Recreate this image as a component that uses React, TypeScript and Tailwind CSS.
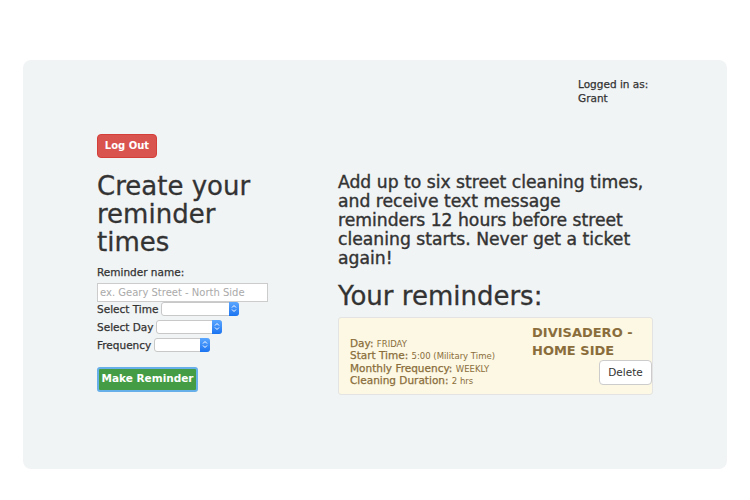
import React from "react";

const font = { fontFamily: '"DejaVu Sans", "Open Sans", sans-serif' };

function Select({ w }: { w: string }) {
  return (
    <div className={`relative h-[14px] ${w} rounded-[3px] border border-[#c8c8c8] bg-white`}>
      <div className="absolute right-[-1px] top-[-1px] flex h-[14px] w-[10px] items-center justify-center rounded-r-[3px] bg-gradient-to-b from-[#5aa6ff] to-[#1a74f0]">
        <svg width="6" height="9" viewBox="0 0 6 9">
          <path d="M1 3.5 L3 1.5 L5 3.5" stroke="white" strokeWidth="1" fill="none" />
          <path d="M1 5.5 L3 7.5 L5 5.5" stroke="white" strokeWidth="1" fill="none" />
        </svg>
      </div>
    </div>
  );
}

export default function App() {
  return (
    <div className="h-[500px] w-[750px] bg-white pt-[60px] pl-[23px] text-[#333]" style={font}>
      <div className="h-[409px] w-[704px] rounded-[8px] bg-[#f1f4f5]">
        <div className="flex pl-[555px] pt-[17px]">
          <div className="whitespace-nowrap text-[10.5px] leading-[14px] text-[#333] [-webkit-text-stroke:0.25px_#333]">
            <div>Logged in as:</div>
            <div>Grant</div>
          </div>
        </div>
        <div className="flex pl-[74px] pt-[27px]">
          <div className="w-[241px]">
            <button className="h-[24px] w-[60px] rounded-[4px] border border-[#d43f3a] bg-[#d9534f] text-[10px] font-bold text-white">
              Log Out
            </button>
            <h1 className="mt-[14px] w-[170px] text-[26px] leading-[28px] text-[#333] [-webkit-text-stroke:0.3px_#333]">
              Create your reminder times
            </h1>
            <div className="mt-[9px] text-[10.5px] leading-[14px] [-webkit-text-stroke:0.25px_#333]">Reminder name:</div>
            <div className="mt-[4px] flex h-[19px] w-[171px] items-center border border-[#ccc] bg-white px-[2px] text-[10px] text-[#aaa]">
              ex. Geary Street - North Side
            </div>
            <div className="mt-[-2px] flex items-center gap-[3px] text-[10.5px] leading-[18px] [-webkit-text-stroke:0.25px_#333]">
              <span>Select Time</span>
              <Select w="w-[78px]" />
            </div>
            <div className="flex items-center gap-[3px] text-[10.5px] leading-[18px] [-webkit-text-stroke:0.25px_#333]">
              <span>Select Day</span>
              <Select w="w-[66px]" />
            </div>
            <div className="flex items-center gap-[3px] text-[10.5px] leading-[18px] [-webkit-text-stroke:0.25px_#333]">
              <span>Frequency</span>
              <Select w="w-[56px]" />
            </div>
            <button className="mt-[13px] h-[25px] w-[101px] rounded-[3px] border-2 border-[#66afe9] bg-[#449d44] text-[10.5px] font-bold text-white">
              Make Reminder
            </button>
          </div>
          <div className="w-[330px] pt-[41px]">
            <p className="text-[17.2px] leading-[19px] text-[#333] [-webkit-text-stroke:0.4px_#333]">
              Add up to six street cleaning times,<br />
              and receive text message<br />
              reminders 12 hours before street<br />
              cleaning starts. Never get a ticket<br />
              again!
            </p>
            <h2 className="mt-[13px] text-[26px] leading-[30px] [-webkit-text-stroke:0.3px_#333]">Your reminders:</h2>
            <div className="mt-[6px] flex h-[78px] w-[315px] rounded-[3px] border border-[#e3e3e3] bg-[#fcf8e3] text-[#8a6d3b]">
              <div className="flex-1 pl-[11px] pt-[19px] text-[10.5px] [-webkit-text-stroke:0.25px_#8a6d3b]">
                <div className="h-[12.3px] leading-[12.3px]">Day: <span className="text-[8.5px] leading-[12.3px] [-webkit-text-stroke:0]">FRIDAY</span></div>
                <div className="h-[12.3px] leading-[12.3px]">Start Time: <span className="text-[8.5px] leading-[12.3px] [-webkit-text-stroke:0]">5:00 (Military Time)</span></div>
                <div className="h-[12.3px] leading-[12.3px]">Monthly Frequency: <span className="text-[8.5px] leading-[12.3px] [-webkit-text-stroke:0]">WEEKLY</span></div>
                <div className="h-[12.3px] leading-[12.3px]">Cleaning Duration: <span className="text-[8.5px] leading-[12.3px] [-webkit-text-stroke:0]">2 hrs</span></div>
              </div>
              <div className="flex w-[120px] flex-col items-end pt-[6px]">
                <div className="w-[120px] text-[13px] font-bold leading-[18px]">
                  DIVISADERO - HOME SIDE
                </div>
                <button className="mt-[0px] h-[25px] w-[53px] rounded-[4px] border border-[#ccc] bg-white text-[10.5px] text-[#333]">
                  Delete
                </button>
              </div>
            </div>
          </div>
        </div>
      </div>
    </div>
  );
}
